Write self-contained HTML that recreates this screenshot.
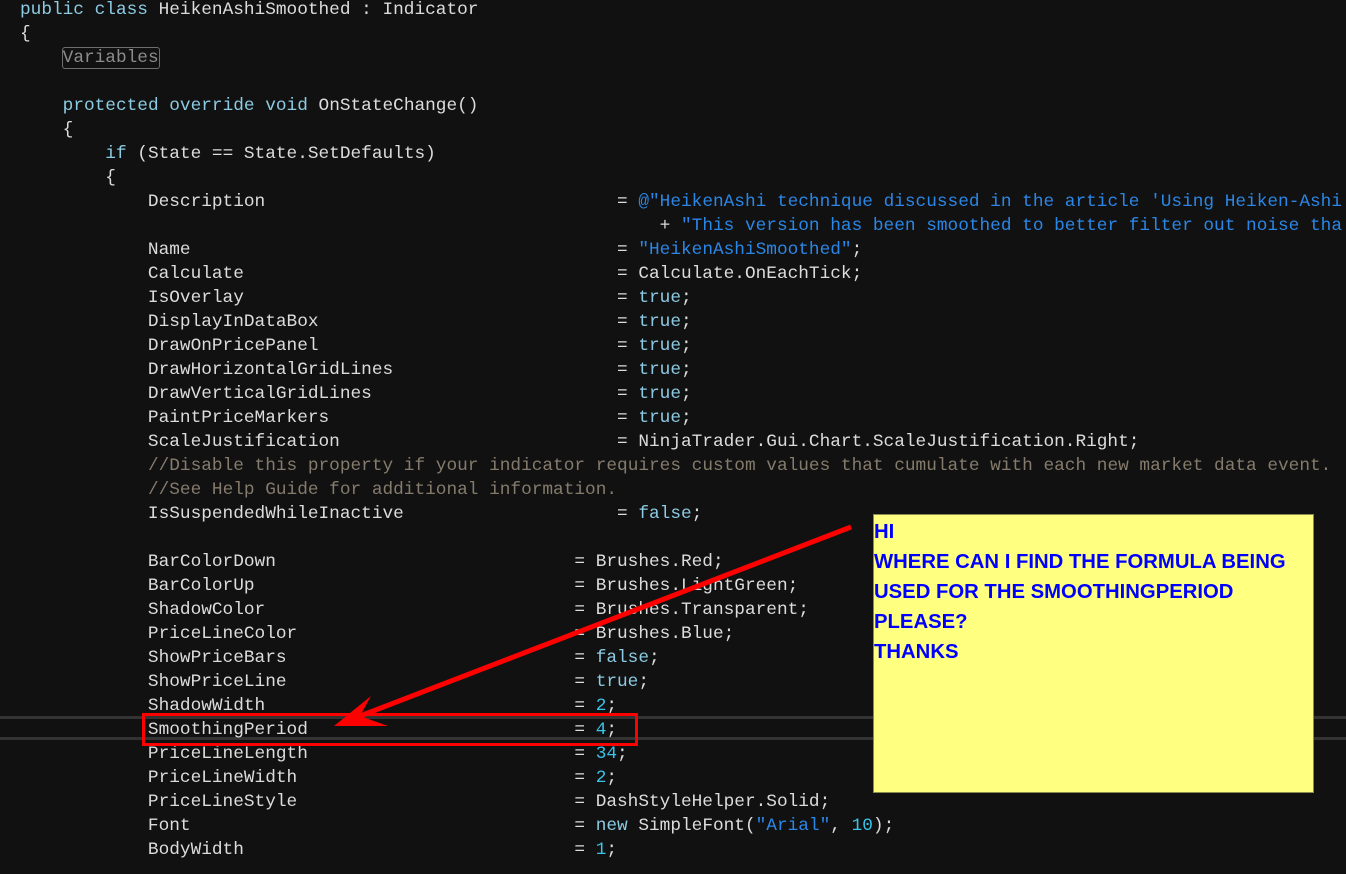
<!DOCTYPE html>
<html><head><meta charset="utf-8"><style>
html,body{margin:0;padding:0;background:#111111;width:1346px;height:874px;overflow:hidden;position:relative}
.code{position:absolute;left:20px;top:-2px;margin:0;font-family:"Liberation Mono",monospace;font-size:17.78px;line-height:24px;color:#dcdcdc;white-space:pre}
.k{color:#8ccbe3}.s{color:#2b86e6}.n{color:#39c4ea}.c{color:#857b6c}
.var{color:#8c8c8c;outline:1.5px solid #6e6e6e;outline-offset:0;border-radius:2px}
.hl{position:absolute;left:0;width:1346px;height:3px;background:#333}
.note{position:absolute;left:873px;top:514px;width:441px;height:279px;background:#ffff80;border:1px solid #8a8a50;font-family:"Liberation Sans",sans-serif;font-weight:bold;color:#0000ff;font-size:20.3px;line-height:30px;padding-top:2px;box-sizing:border-box}
</style></head><body>
<div class="hl" style="top:716px"></div>
<div class="hl" style="top:737px"></div>
<pre class="code"><span class="k">public class</span> HeikenAshiSmoothed : Indicator
{
    <span class="var">Variables</span>

    <span class="k">protected override void</span> OnStateChange()
    {
        <span class="k">if</span> (State == State.SetDefaults)
        {
            Description                                 = <span class="s">@"HeikenAshi technique discussed in the article 'Using Heiken-Ashi</span>
                                                            + <span class="s">"This version has been smoothed to better filter out noise tha</span>
            Name                                        = <span class="s">"HeikenAshiSmoothed"</span>;
            Calculate                                   = Calculate.OnEachTick;
            IsOverlay                                   = <span class="k">true</span>;
            DisplayInDataBox                            = <span class="k">true</span>;
            DrawOnPricePanel                            = <span class="k">true</span>;
            DrawHorizontalGridLines                     = <span class="k">true</span>;
            DrawVerticalGridLines                       = <span class="k">true</span>;
            PaintPriceMarkers                           = <span class="k">true</span>;
            ScaleJustification                          = NinjaTrader.Gui.Chart.ScaleJustification.Right;
            <span class="c">//Disable this property if your indicator requires custom values that cumulate with each new market data event.</span>
            <span class="c">//See Help Guide for additional information.</span>
            IsSuspendedWhileInactive                    = <span class="k">false</span>;

            BarColorDown                            = Brushes.Red;
            BarColorUp                              = Brushes.LightGreen;
            ShadowColor                             = Brushes.Transparent;
            PriceLineColor                          = Brushes.Blue;
            ShowPriceBars                           = <span class="k">false</span>;
            ShowPriceLine                           = <span class="k">true</span>;
            ShadowWidth                             = <span class="n">2</span>;
            SmoothingPeriod                         = <span class="n">4</span>;
            PriceLineLength                         = <span class="n">34</span>;
            PriceLineWidth                          = <span class="n">2</span>;
            PriceLineStyle                          = DashStyleHelper.Solid;
            Font                                    = <span class="k">new</span> SimpleFont(<span class="s">"Arial"</span>, <span class="n">10</span>);
            BodyWidth                               = <span class="n">1</span>;</pre>
<div style="position:absolute;left:142px;top:713px;width:490px;height:27px;border:3px solid #f00"></div>
<svg style="position:absolute;left:0;top:0" width="1346" height="874">
<line x1="851" y1="527" x2="355" y2="718" stroke="#ff0000" stroke-width="5"/>
<polygon points="334,726 371,696 360,716 388,726" fill="#ff0000"/>
</svg>
<div class="note">
<div>HI</div><div>WHERE CAN I FIND THE FORMULA BEING</div><div>USED FOR THE SMOOTHINGPERIOD</div><div>PLEASE?</div><div>THANKS</div>
</div>
</body></html>
